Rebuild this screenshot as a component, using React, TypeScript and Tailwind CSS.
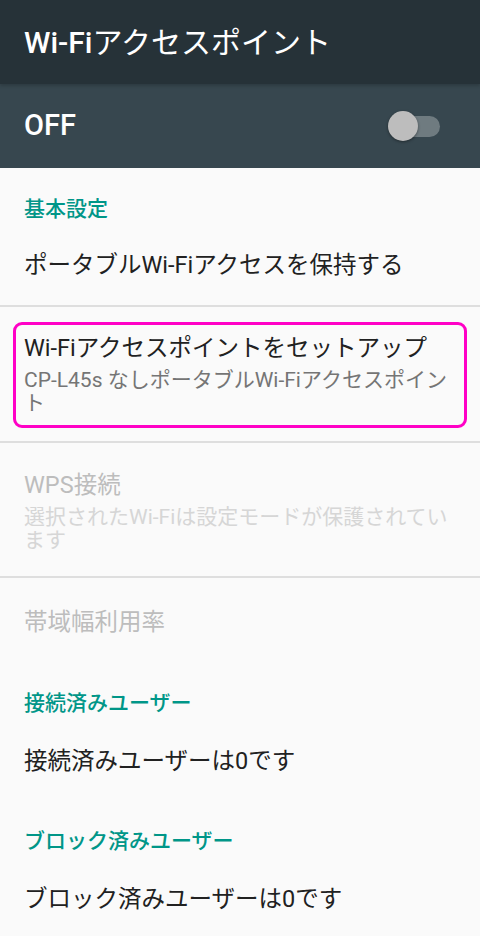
import React from 'react';

const font = "font-['Roboto','Noto_Sans_CJK_JP',sans-serif]";

function Category({ label, className = '' }: { label: string; className?: string }) {
  return (
    <div className={`px-6 text-[21px] leading-[24px] font-medium text-[#009688] ${className}`}>
      {label}
    </div>
  );
}

function Divider() {
  return <div className="h-[2px] bg-[#dedede]" />;
}

export default function App() {
  return (
    <div className={`w-[480px] h-[936px] overflow-hidden bg-[#fafafa] ${font}`}>
      {/* タイトルバー */}
      <header className="relative z-10 h-[84px] bg-[#263238] flex items-center px-6 shadow-[0_2px_3px_rgba(0,0,0,0.18)]">
        <h1 className="text-[30px] font-normal text-white">
          <span className="font-medium">Wi-Fi</span>アクセスポイント
        </h1>
      </header>

      {/* スイッチバー */}
      <div className="h-[84px] bg-[#37474f] flex items-center justify-between px-6">
        <span className="text-[29px] font-medium text-white">OFF</span>
        <div className="relative w-[52px] h-[30px] mr-4 flex items-center">
          <div className="ml-[8px] w-[44px] h-[21px] rounded-full bg-[#6f7b80]" />
          <div className="absolute left-0 top-0 w-[30px] h-[30px] rounded-full bg-[#bdbdbd] shadow-[0_1px_3px_rgba(0,0,0,0.4)]" />
        </div>
      </div>

      {/* 基本設定 */}
      <Category label="基本設定" className="pt-[29px]" />
      <div className="px-6 pt-[29px] pb-[25px] text-[23.5px] leading-[30px] text-[#212121]">
        ポータブルWi-Fiアクセスを保持する
      </div>
      <Divider />

      <div className="mx-[13px] mt-[15px] mb-[13px] border-[3px] border-[#ff00c6] rounded-[9px] pl-[8px] pr-[2px] pt-[8px] pb-[10px]">
        <div className="text-[23.5px] leading-[30px] text-[#212121]">Wi-Fiアクセスポイントをセットアップ</div>
        <div className="mt-[6px] text-[21px] leading-[23px] text-[#757575]">
          CP-L45s なしポータブルWi-Fiアクセスポイント
        </div>
      </div>
      <Divider />

      <div className="px-6 pt-[27px] pb-[24px]">
        <div className="text-[23.5px] leading-[30px] text-[#bdbdbd]">WPS接続</div>
        <div className="mt-[6px] text-[21px] leading-[23px] text-[#d6d6d6]">
          選択されたWi-Fiは設定モードが保護されています
        </div>
      </div>
      <Divider />

      <div className="px-6 pt-[29px] text-[23.5px] leading-[30px] text-[#bdbdbd]">帯域幅利用率</div>

      <Category label="接続済みユーザー" className="pt-[54px]" />
      <div className="px-6 pt-[31px] text-[23.5px] leading-[30px] text-[#212121]">接続済みユーザーは0です</div>

      <Category label="ブロック済みユーザー" className="pt-[53px]" />
      <div className="px-6 pt-[31px] text-[23.5px] leading-[30px] text-[#212121]">ブロック済みユーザーは0です</div>
    </div>
  );
}
